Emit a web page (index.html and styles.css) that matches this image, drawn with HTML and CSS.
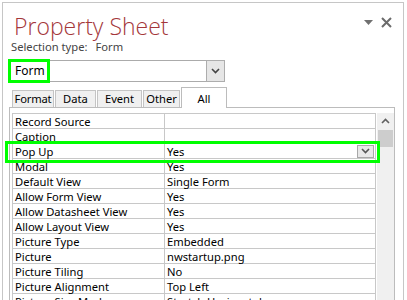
FILE: index.html
```html
<!DOCTYPE html>
<html lang="en">
<head>
    <meta charset="UTF-8">
    <title>Property Sheet</title>
    <link rel="stylesheet" href="styles.css">
</head>
<body>
    <div class="sheet">
        <div class="header">
            <h1 class="title">Property Sheet</h1>
            <div class="header-tools">
                <svg class="tool-menu" width="9" height="5" viewBox="0 0 9 5"><path d="M0 0h9L4.5 5z" fill="#707070"/></svg>
                <svg class="tool-close" width="11" height="11" viewBox="0 0 11 11"><path d="M1 1l9 9M10 1l-9 9" stroke="#6b6b6b" stroke-width="2"/></svg>
            </div>
        </div>
        <div class="selection">Selection type:<span class="selection-value">Form</span></div>

        <div class="combo">
            <span class="combo-text">Form</span>
            <span class="drop-btn">
                <svg width="9" height="6" viewBox="0 0 9 6"><path d="M1 1l3.5 3.5L8 1" fill="none" stroke="#444" stroke-width="1.6"/></svg>
            </span>
            <span class="mark mark-combo"></span>
        </div>

        <div class="tabs">
            <div class="tab">Format</div>
            <div class="tab">Data</div>
            <div class="tab">Event</div>
            <div class="tab">Other</div>
            <div class="tab active">All</div>
        </div>

        <div class="panel">
            <div class="grid-wrap">
                <table class="grid">
                    <tr><td>Record Source</td><td></td></tr>
                    <tr><td>Caption</td><td></td></tr>
                    <tr>
                        <td>Pop Up</td>
                        <td>
                            <div class="cell-combo">
                                <span>Yes</span>
                                <span class="cell-btn">
                                    <svg width="9" height="6" viewBox="0 0 9 6"><path d="M1 1l3.5 3.5L8 1" fill="none" stroke="#555" stroke-width="1.6"/></svg>
                                </span>
                            </div>
                        </td>
                    </tr>
                    <tr><td>Modal</td><td>Yes</td></tr>
                    <tr><td>Default View</td><td>Single Form</td></tr>
                    <tr><td>Allow Form View</td><td>Yes</td></tr>
                    <tr><td>Allow Datasheet View</td><td>Yes</td></tr>
                    <tr><td>Allow Layout View</td><td>Yes</td></tr>
                    <tr><td>Picture Type</td><td>Embedded</td></tr>
                    <tr><td>Picture</td><td>nwstartup.png</td></tr>
                    <tr><td>Picture Tiling</td><td>No</td></tr>
                    <tr><td>Picture Alignment</td><td>Top Left</td></tr>
                    <tr><td>Picture Size Mode</td><td>Stretch Horizontal</td></tr>
                </table>
                <span class="mark mark-row"></span>
            </div>
            <div class="scrollbar">
                <svg class="scroll-up" width="9" height="6" viewBox="0 0 9 6"><path d="M1 5l3.5-3.5L8 5" fill="none" stroke="#606060" stroke-width="1.6"/></svg>
                <div class="thumb"></div>
            </div>
        </div>
    </div>
</body>
</html>
```

FILE: styles.css
```css
* {
    margin: 0;
    padding: 0;
    box-sizing: border-box;
}

body {
    background: #fff;
    font-family: "Noto Sans", "Open Sans", sans-serif;
    font-size: 11.2px;
    color: #000;
    overflow: hidden;
    height: 300px;
}

.sheet {
    margin: 2px 3px 0 2px;
    height: 298px;
    border: 1px solid #c6c6c6;
    border-bottom: none;
    overflow: hidden;
}

.header {
    display: flex;
    justify-content: space-between;
    align-items: flex-start;
    padding: 9px 11px 0 11px;
    height: 37px;
}

.title {
    font-family: "Open Sans", sans-serif;
    font-weight: 300;
    font-size: 23px;
    line-height: 28px;
    color: #a4373a;
}

.header-tools {
    display: flex;
    align-items: center;
    gap: 8px;
    padding-top: 5px;
}

.selection {
    padding-left: 8px;
    color: #444;
    height: 20px;
    line-height: 14px;
}

.selection-value {
    margin-left: 8px;
}

/* object picker */
.combo {
    position: relative;
    display: flex;
    justify-content: space-between;
    margin-left: 7px;
    width: 215px;
    height: 22px;
    border: 1px solid #ababab;
}

.combo-text {
    padding-left: 4px;
    font-size: 12px;
    line-height: 20px;
}

.drop-btn {
    display: flex;
    align-items: center;
    justify-content: center;
    width: 19px;
    margin: -1px -1px -1px 0;
    border: 1px solid #adadad;
    background: #e6e6e6;
}

.mark {
    position: absolute;
    border: 3px solid #00ff00;
}

.mark-combo {
    left: -3px;
    top: -2px;
    width: 42px;
    height: 24px;
}

/* tabs */
.tabs {
    display: flex;
    align-items: flex-end;
    margin: 5px 0 0 9px;
    height: 20px;
}

.tab {
    height: 17px;
    margin-right: 1px;
    line-height: 16px;
    text-align: center;
    background: #f0f0f0;
    border: 1px solid #c4c4c4;
    border-bottom: none;
}

.tab:nth-child(1) { width: 42px; letter-spacing: -0.2px; }
.tab:nth-child(2) { width: 41px; }
.tab:nth-child(3) { width: 45px; }
.tab:nth-child(4) { width: 37px; }

.tab.active {
    width: 46px;
    height: 21px;
    margin-bottom: -1px;
    padding-top: 3px;
    background: #fff;
    border-color: #bcbcbc;
    position: relative;
}

.panel {
    display: flex;
    align-items: flex-start;
    margin-left: 6px;
    width: 386px;
    height: 200px;
    padding: 5px 0 0 2px;
    border: 1px solid #bcbcbc;
    border-bottom: none;
}

.grid-wrap {
    position: relative;
}

.grid {
    border-collapse: collapse;
    width: 364px;
}

.grid td {
    height: 15px;
    padding: 0 2px;
    line-height: 13px;
    border: 1px solid #c8c8c8;
    white-space: nowrap;
}

.grid td:first-child {
    width: 152px;
}

.cell-combo {
    display: flex;
    justify-content: space-between;
    align-items: center;
}

.cell-btn {
    display: flex;
    align-items: center;
    justify-content: center;
    width: 17px;
    height: 13px;
    margin-right: -1px;
    border: 1px solid #a8a8a8;
    background: #e8e8e8;
}

.mark-row {
    left: -7px;
    top: 28px;
    width: 375px;
    height: 22px;
}

.scrollbar {
    width: 17px;
    height: 200px;
    margin-left: 1px;
    background: #f0f0f0;
    display: flex;
    flex-direction: column;
    align-items: center;
}

.scroll-up {
    margin: 5px 0 6px;
}

.thumb {
    width: 15px;
    height: 17px;
    background: #cdcdcd;
}
```
